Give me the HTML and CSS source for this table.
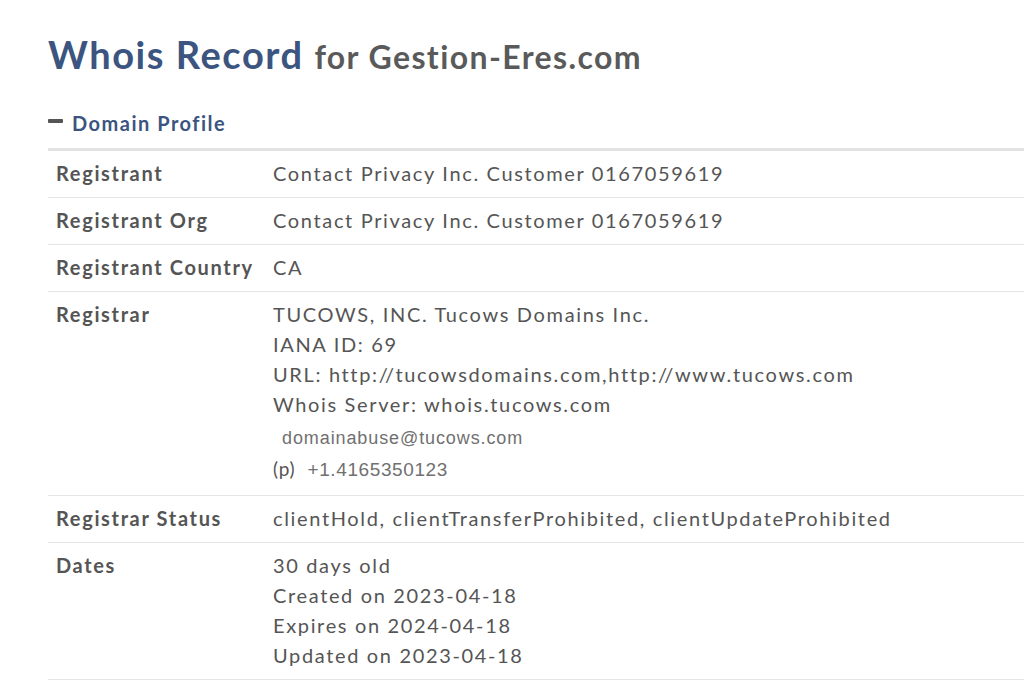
FILE: index.html
```html
<!DOCTYPE html>
<html lang="en">
<head>
<meta charset="utf-8">
<title>Whois Record for Gestion-Eres.com</title>
<link rel="stylesheet" href="styles.css">
</head>
<body>
<main class="page">
  <h1 class="title"><span class="title-main">Whois Record</span> <span class="title-sub">for Gestion-Eres.com</span></h1>
  <h2 class="section"><span class="minus"></span>Domain Profile</h2>
  <table class="profile">
    <tbody>
      <tr><th>Registrant</th><td>Contact Privacy Inc. Customer 0167059619</td></tr>
      <tr><th>Registrant Org</th><td>Contact Privacy Inc. Customer 0167059619</td></tr>
      <tr><th>Registrant Country</th><td>CA</td></tr>
      <tr><th>Registrar</th><td>
        <div class="line">TUCOWS, INC. Tucows Domains Inc.</div>
        <div class="line">IANA ID: 69</div>
        <div class="line">URL: http://tucowsdomains.com,http://www.tucows.com</div>
        <div class="line">Whois Server: whois.tucows.com</div>
        <div class="email">domainabuse@tucows.com</div>
        <div class="phone"><span class="p">(p)</span><span class="num">+1.4165350123</span></div>
      </td></tr>
      <tr><th>Registrar Status</th><td>clientHold, clientTransferProhibited, clientUpdateProhibited</td></tr>
      <tr><th>Dates</th><td>
        <div class="line">30 days old</div>
        <div class="line">Created on 2023-04-18</div>
        <div class="line">Expires on 2024-04-18</div>
        <div class="line">Updated on 2023-04-18</div>
      </td></tr>
    </tbody>
  </table>
</main>
</body>
</html>
```

FILE: styles.css
```css
html, body {
  margin: 0;
  padding: 0;
  background: #fff;
}
body {
  font-family: Lato, "Liberation Sans", sans-serif;
  color: #555;
  font-variant-ligatures: none;
}
.page {
  padding: 28px 0 0 48px;
  overflow: hidden;
}
.title {
  margin: 0;
  font-size: 38px;
  line-height: 52px;
  font-weight: 700;
  letter-spacing: 1.55px;
}
.title-main {
  color: #3b5580;
}
.title-sub {
  color: #5a5a5a;
  font-size: 32px;
  font-weight: 700;
  letter-spacing: 1.4px;
}
.section {
  margin: 27px 0 0 0;
  display: flex;
  align-items: center;
  font-size: 20px;
  line-height: 26px;
  font-weight: 700;
  color: #3b5580;
  letter-spacing: 1.5px;
}
.minus {
  display: inline-block;
  width: 15px;
  height: 4px;
  border-radius: 1px;
  background: #555;
  margin-right: 9px;
  margin-top: -4px;
}
.profile {
  margin-top: 12px;
  width: 976px;
  border-collapse: collapse;
  border-top: 3px solid #e3e3e3;
  font-size: 20px;
  letter-spacing: 1.65px;
}
.profile tr {
  border-bottom: 1px solid #e6e6e6;
}
.profile th, .profile td {
  text-align: left;
  vertical-align: top;
  padding: 7px 8px 9px;
  line-height: 30px;
  color: #555;
}
.profile th {
  width: 201px;
  font-weight: 700;
  white-space: nowrap;
}
.profile td {
  font-weight: 400;
}
.email {
  font-family: "Liberation Sans", Arial, sans-serif;
  font-size: 18px;
  letter-spacing: 0.9px;
  color: #707070;
  height: 35px;
  line-height: 38px;
  padding-left: 9px;
}
.phone {
  height: 32px;
  line-height: 30px;
  display: flex;
  align-items: baseline;
}
.phone .p {
  font-size: 19px;
  color: #555;
  letter-spacing: 0.8px;
  margin-right: 12px;
}
.phone .num {
  font-family: "Liberation Sans", Arial, sans-serif;
  font-size: 19px;
  letter-spacing: 0.6px;
  color: #707070;
}
```
